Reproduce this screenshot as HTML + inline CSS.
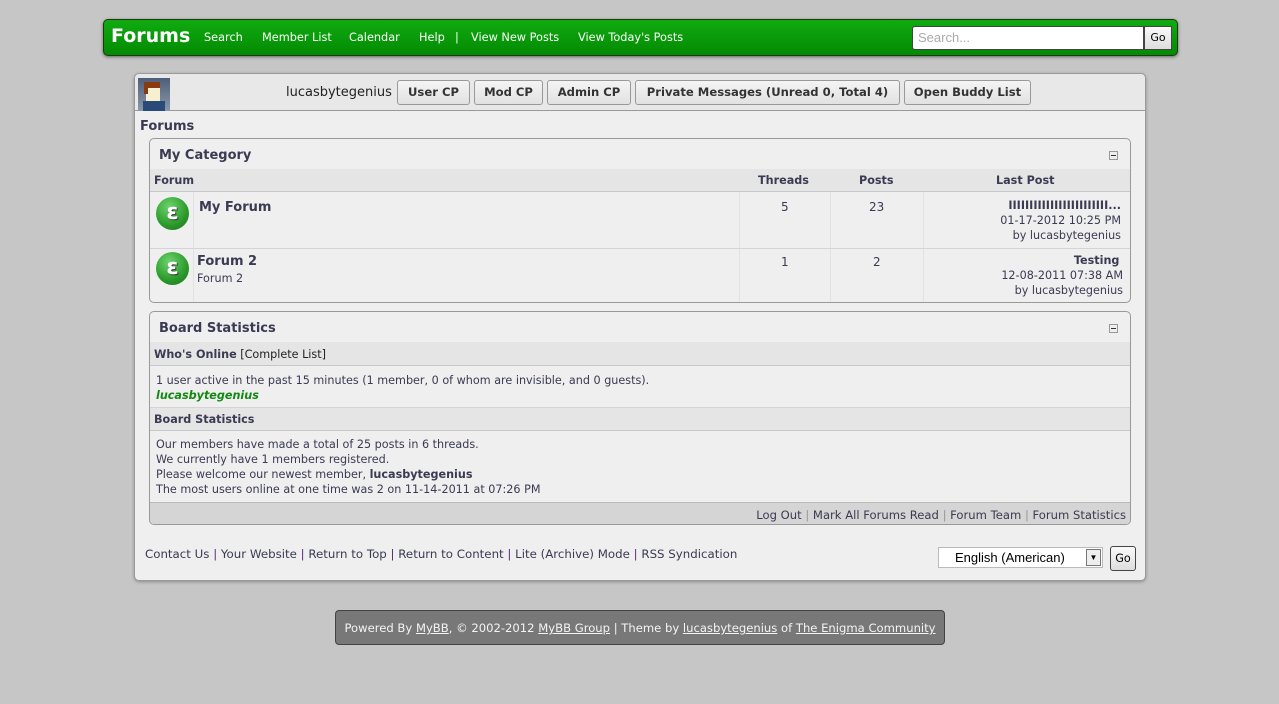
<!DOCTYPE html>
<html><head><meta charset="utf-8"><style>
*{box-sizing:border-box;margin:0;padding:0}
body{width:1279px;height:704px;background:#c6c6c6;font-family:"DejaVu Sans","Liberation Sans",sans-serif;font-size:11.2px;color:#3a3a52;position:relative;overflow:hidden}
.a{position:absolute}
.hdr{left:103px;top:19px;width:1075px;height:37px;border:1px solid #1a3a10;border-radius:5px;background:linear-gradient(#10ab10,#038a03);box-shadow:0 1px 3px rgba(0,0,0,.5)}
.hdr .t{position:absolute;color:#fff;font-size:11.3px;top:11px}
.main{left:134px;top:73px;width:1012px;height:508px;background:#efefef;border:1px solid #9a9a9a;border-radius:5px;box-shadow:0 1px 3px rgba(0,0,0,.3)}
.ubar{left:0;top:0;width:1010px;height:37px;background:#e8e8e8;border-bottom:1px solid #999;border-radius:5px 5px 0 0}
.btn{position:absolute;top:6px;height:25px;border:1px solid #999;border-radius:3px;background:linear-gradient(#f4f4f4,#e2e2e2);font-weight:bold;font-size:11.6px;line-height:23px;text-align:center;color:#333}
.box{position:absolute;left:14px;width:982px;border:1px solid #999;border-radius:5px;background:#efefef;overflow:hidden}
.th{background:#e5e5e5;border-bottom:1px solid #c4c8cc;font-weight:bold}
b{font-weight:bold}
.r{text-align:right}
.min{position:absolute;right:12px;width:9px;height:9px;border:1px solid #999;background:#eee}
.min:after{content:"";position:absolute;left:1px;top:3px;width:5px;height:1px;background:#333}
.ic{position:absolute;left:6px;width:33px;height:33px;border-radius:50%;background:radial-gradient(circle at 40% 30%,#6ed36e,#2a9a2a 60%,#1e6e1e);color:#fff;font-weight:bold;font-size:22px;line-height:31px;text-align:center;text-shadow:1px 1px 1px #333}
.vl{position:absolute;top:0;bottom:0;width:1px;background:#e2e2e2}
.hl{position:absolute;left:0;right:0;height:1px;background:#d4d4d4}
</style></head><body>
<div class="a hdr">
<div class="t" style="left:7px;top:5px;font-size:19px;font-weight:bold">Forums</div>
<div class="t" style="left:100px">Search</div>
<div class="t" style="left:158px">Member List</div>
<div class="t" style="left:245px">Calendar</div>
<div class="t" style="left:315px">Help</div>
<div class="t" style="left:351px">|</div>
<div class="t" style="left:367px">View New Posts</div>
<div class="t" style="left:474px">View Today's Posts</div>
<div class="a" style="left:808px;top:6px;width:232px;height:24px;background:#fff;border:1px solid #444;border-radius:3px 0 0 3px;color:#aaa;font-family:'Liberation Sans',sans-serif;font-size:13px;line-height:22px;padding-left:5px">Search...</div>
<div class="a" style="left:1040px;top:6px;width:28px;height:24px;background:linear-gradient(#fafafa,#ddd);border:1px solid #444;font-size:11px;line-height:22px;text-align:center;color:#000">Go</div>
</div>
<div class="a main">
<div class="a ubar">
<div class="a" style="left:3px;top:4px;width:32px;height:33px;background:linear-gradient(#4d5f78,#8a98aa)">
<div class="a" style="left:8px;top:5px;width:14px;height:18px;background:#f8eed0"></div>
<div class="a" style="left:6px;top:4px;width:16px;height:6px;background:#8a3a10"></div>
<div class="a" style="left:6px;top:4px;width:4px;height:12px;background:#8a3a10"></div>
<div class="a" style="left:5px;top:23px;width:22px;height:10px;background:#2a4a7a"></div></div>
<div class="a" style="left:151px;top:11px;font-size:13px;color:#222">lucasbytegenius</div>
<div class="btn" style="left:262px;width:73px">User CP</div>
<div class="btn" style="left:339px;width:69px">Mod CP</div>
<div class="btn" style="left:412px;width:84px">Admin CP</div>
<div class="btn" style="left:500px;width:265px">Private Messages (Unread 0, Total 4)</div>
<div class="btn" style="left:769px;width:127px">Open Buddy List</div>
</div>
<div class="a" style="left:5px;top:45px;font-size:13px;font-weight:bold">Forums</div>
<div class="box" style="top:64px;height:165px">
<div class="a" style="left:9px;top:9px;font-size:13px;font-weight:bold">My Category</div>
<div class="min" style="top:12px"></div>
<div class="a th" style="left:0;top:30px;width:980px;height:23px"></div>
<div class="a" style="left:4px;top:35px;font-weight:bold">Forum</div>
<div class="a" style="left:608px;top:35px;font-weight:bold">Threads</div>
<div class="a" style="left:709px;top:35px;font-weight:bold">Posts</div>
<div class="a" style="left:846px;top:35px;font-weight:bold">Last Post</div>
<div class="a" style="left:0;top:53px;width:980px;height:112px">
<div class="vl" style="left:43px"></div><div class="vl" style="left:589px"></div><div class="vl" style="left:680px"></div><div class="vl" style="left:773px"></div>
<div class="hl" style="top:56px"></div>
<div class="ic" style="top:5px">&#603;</div>
<div class="a" style="left:49px;top:8px;font-size:13px;font-weight:bold">My Forum</div>
<div class="a" style="left:631px;top:8px;font-size:12px">5</div>
<div class="a" style="left:719px;top:8px;font-size:12px">23</div>
<div class="a r" style="right:9px;top:6px;font-weight:bold;line-height:15px">IIIIIIIIIIIIIIIIIIIIIIII...<br><span style="font-weight:normal">01-17-2012 10:25 PM</span><br><span style="font-weight:normal">by lucasbytegenius</span></div>
<div class="ic" style="top:60px">&#603;</div>
<div class="a" style="left:47px;top:62px;font-size:13px;font-weight:bold">Forum 2</div>
<div class="a" style="left:47px;top:80px">Forum 2</div>
<div class="a" style="left:631px;top:63px;font-size:12px">1</div>
<div class="a" style="left:723px;top:63px;font-size:12px">2</div>
<div class="a r" style="right:7px;top:61px;line-height:15px"><b>Testing</b>&nbsp;<br>12-08-2011 07:38 AM<br>by lucasbytegenius</div>
</div></div>
<div class="box" style="top:237px;height:214px">
<div class="a" style="left:9px;top:9px;font-size:13px;font-weight:bold">Board Statistics</div>
<div class="min" style="top:12px"></div>
<div class="a th" style="left:0;top:30px;width:980px;height:24px"></div>
<div class="a" style="left:4px;top:36px"><b>Who's Online</b> <span style="color:#222">[Complete List]</span></div>
<div class="a" style="left:6px;top:61px;line-height:15px">1 user active in the past 15 minutes (1 member, 0 of whom are invisible, and 0 guests).<br><b style="color:#118a11;font-style:italic">lucasbytegenius</b></div>
<div class="a th" style="left:0;top:95px;width:980px;height:24px;border-top:1px solid #d4d4d4"></div>
<div class="a" style="left:4px;top:101px;font-weight:bold">Board Statistics</div>
<div class="a" style="left:6px;top:125px;line-height:15px">Our members have made a total of 25 posts in 6 threads.<br>We currently have 1 members registered.<br>Please welcome our newest member, <b>lucasbytegenius</b><br>The most users online at one time was 2 on 11-14-2011 at 07:26 PM</div>
<div class="a" style="left:0;top:190px;width:980px;height:24px;background:#d5d5d5;border-top:1px solid #bbb"></div>
<div class="a r" style="right:4px;top:196px;font-size:11.6px">Log Out <span style="color:#999">|</span> Mark All Forums Read <span style="color:#999">|</span> Forum Team <span style="color:#999">|</span> Forum Statistics</div>
</div>
<div class="a" style="left:10px;top:473px;font-size:11.8px">Contact Us <span style="color:#5a2a7a">|</span> Your Website <span style="color:#5a2a7a">|</span> Return to Top <span style="color:#5a2a7a">|</span> Return to Content <span style="color:#5a2a7a">|</span> Lite (Archive) Mode <span style="color:#5a2a7a">|</span> RSS Syndication</div>
<div class="a" style="left:803px;top:473px;width:165px;height:21px;background:#fff;border:1px solid #bbb;font-family:'Liberation Sans',sans-serif;font-size:13px;color:#000;line-height:19px;padding-left:16px">English (American)
<div class="a" style="right:1px;top:1px;width:15px;height:17px;border:1px solid #777;background:#eee;font-size:8px;line-height:15px;text-align:center">▼</div></div>
<div class="a" style="left:975px;top:472px;width:26px;height:25px;border:1px solid #444;border-radius:3px;background:linear-gradient(#fafafa,#ddd);text-align:center;line-height:23px;color:#000">Go</div>
</div>
<div class="a" style="left:335px;top:610px;width:610px;height:35px;background:#787878;border:1px solid #444;border-radius:4px;color:#f4f4f4;text-align:center;line-height:34px;font-size:11.6px">Powered By <u>MyBB</u>, © 2002-2012 <u>MyBB Group</u> | Theme by <u>lucasbytegenius</u> of <u>The Enigma Community</u></div>
</body></html>
